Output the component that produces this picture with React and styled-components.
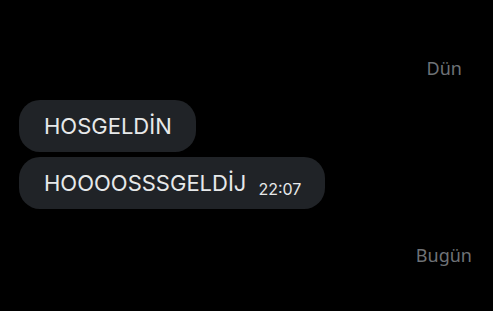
import React from 'react'
import styled, {createGlobalStyle} from 'styled-components';

const GlobalStyle = createGlobalStyle`
    html, body {
        margin: 0;
        padding: 0;
        background: #000;
    }
    body {
        width: 493px;
        height: 311px;
        overflow: hidden;
    }
`

const messages = [
    {id: 1, text: 'HOSGELDİN'},
    {id: 2, text: 'HOOOOSSSGELDİJ', time: '22:07'},
];

function App() {
    return (
        <>
        <GlobalStyle />
        <Chat>
            <DayLabel top={56} right={31}>Dün</DayLabel>
            <Group>
                {messages.map((m) => (
                    <Bubble key={m.id}>
                        <span>{m.text}</span>
                        {m.time && <Time>{m.time}</Time>}
                    </Bubble>
                ))}
            </Group>
            <DayLabel top={34} right={21}>Bugün</DayLabel>
        </Chat>
        </>
    )
};

const Chat = styled.div`
    display: flex;
    flex-direction: column;
    width: 493px;
    height: 311px;
    background: #000;
    box-sizing: border-box;
`

const DayLabel = styled.div`
    align-self: flex-end;
    margin-top: ${(p) => p.top}px;
    margin-right: ${(p) => p.right}px;
    font-family: "Noto Sans", "Open Sans", sans-serif;
    font-size: 18px;
    line-height: 24px;
    color: #6e7276;
`

const Group = styled.div`
    display: flex;
    flex-direction: column;
    align-items: flex-start;
    gap: 5px;
    margin-top: 20px;
    padding-left: 19px;
`

const Bubble = styled.div`
    display: flex;
    gap: 12px;
    height: 52px;
    box-sizing: border-box;
    padding: 0 24px 0 25px;
    align-items: center;
    background: #202327;
    border-radius: 21px;
    font-family: Inter, "Noto Sans", sans-serif;
    font-size: 22px;
    color: #e7e9ea;

    span {
        line-height: 52px;
    }
`

const Time = styled.span`
    font-size: 16px;
    color: #e7e9ea;
    margin-top: 12px;
    line-height: 20px !important;
`

export default App;
